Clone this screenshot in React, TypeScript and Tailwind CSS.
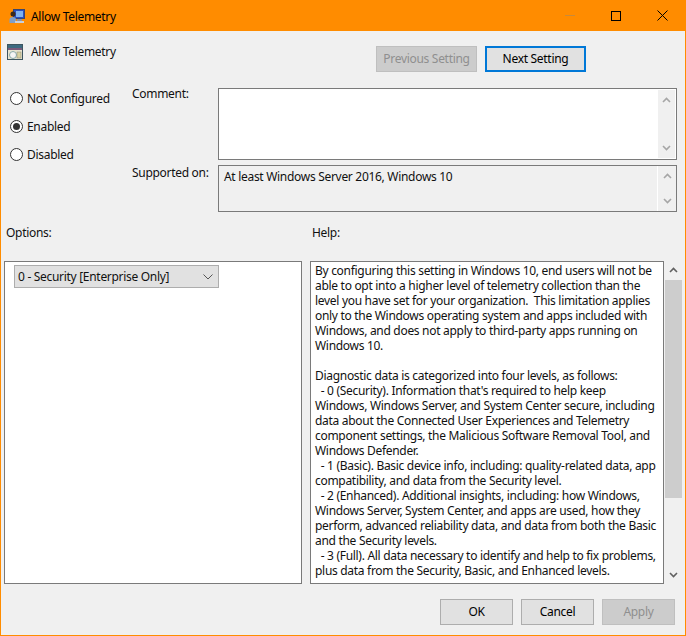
import React from 'react';

const helpLines = [
  'By configuring this setting in Windows 10, end users will not be',
  'able to opt into a higher level of telemetry collection than the',
  'level you have set for your organization.  This limitation applies',
  'only to the Windows operating system and apps included with',
  'Windows, and does not apply to third-party apps running on',
  'Windows 10.',
  '',
  'Diagnostic data is categorized into four levels, as follows:',
  '  - 0 (Security). Information that\'s required to help keep',
  'Windows, Windows Server, and System Center secure, including',
  'data about the Connected User Experiences and Telemetry',
  'component settings, the Malicious Software Removal Tool, and',
  'Windows Defender.',
  '  - 1 (Basic). Basic device info, including: quality-related data, app',
  'compatibility, and data from the Security level.',
  '  - 2 (Enhanced). Additional insights, including: how Windows,',
  'Windows Server, System Center, and apps are used, how they',
  'perform, advanced reliability data, and data from both the Basic',
  'and the Security levels.',
  '  - 3 (Full). All data necessary to identify and help to fix problems,',
  'plus data from the Security, Basic, and Enhanced levels.',
];

function Chevron({ up, color = '#a6a6a6' }: { up?: boolean; color?: string }) {
  return (
    <svg width="9" height="6" viewBox="0 0 9 6" fill="none">
      <path d={up ? 'M1 5L4.5 1.5L8 5' : 'M1 1L4.5 4.5L8 1'} stroke={color} strokeWidth="1.6" />
    </svg>
  );
}

function Radio({ label, checked }: { label: string; checked?: boolean }) {
  return (
    <div className="flex items-center h-[28px]">
      <div className="w-[13px] h-[13px] rounded-full border border-[#333] bg-white flex items-center justify-center">
        {checked && <div className="w-[7px] h-[7px] rounded-full bg-[#333]" />}
      </div>
      <span className="ml-[4px]">{label}</span>
    </div>
  );
}

function DialogButton({ label, disabled, focus, w }: { label: string; disabled?: boolean; focus?: boolean; w: string }) {
  const look = disabled
    ? 'bg-[#cccccc] border border-[#bfbfbf] text-[#8f8f8f]'
    : focus
      ? 'bg-[#e1e1e1] border-2 border-[#0078d7] text-black'
      : 'bg-[#e1e1e1] border border-[#adadad] text-black';
  return <div className={`${w} ${look} flex items-center justify-center pb-px`}>{label}</div>;
}

export default function App() {
  return (
    <div className="w-[686px] h-[636px] bg-[#f0f0f0] border-x border-b border-[#ff8c00] flex flex-col text-[12px] leading-[15px] tracking-[-0.3px] text-[#111] font-['Noto_Sans','Open_Sans',sans-serif] overflow-hidden">
      {/* title bar */}
      <div className="h-[31px] -mx-px bg-[#ff8c00] flex items-center shrink-0">
        <svg className="ml-[9px]" width="16" height="16" viewBox="0 0 16 16">
          <rect x="4.5" y="1.5" width="11" height="9" fill="#2a4fc0" stroke="#39456e" />
          <rect x="7" y="3" width="7" height="6" fill="#7fb2f0" />
          <rect x="8" y="11" width="5" height="2" fill="#8a93a8" />
          <circle cx="4" cy="6" r="2.5" fill="#3a2a1c" />
          <path d="M0.5 15V11.5C0.5 9.8 2 9 4 9C6 9 7 10 7 11.5V15Z" fill="#7f9fc8" />
          <rect x="6" y="13" width="9" height="2" fill="#c8cfda" />
        </svg>
        <span className="ml-[6px] pt-px text-black">Allow Telemetry</span>
        <div className="ml-auto flex items-center h-full">
          <div className="w-[46px] flex justify-center"><div className="w-[10px] h-px bg-[#c98a3a]" /></div>
          <div className="w-[46px] flex justify-center"><div className="w-[10px] h-[10px] border border-black" /></div>
          <div className="w-[46px] flex justify-center mr-px">
            <svg width="11" height="11" viewBox="0 0 11 11" fill="none"><path d="M0.5 0.5L10.5 10.5M10.5 0.5L0.5 10.5" stroke="#000" /></svg>
          </div>
        </div>
      </div>

      {/* header */}
      <div className="h-[57px] flex shrink-0">
        <svg className="ml-[6px] mt-[13px]" width="16" height="16" viewBox="0 0 16 16">
          <rect x="0.5" y="0.5" width="15" height="15" fill="#e8e4d0" stroke="#3d5560" />
          <rect x="1" y="1" width="14" height="3" fill="#3d6a80" />
          <rect x="1" y="4" width="14" height="2" fill="#7a5a7a" />
          <circle cx="6" cy="11" r="3.5" fill="#f4f4f4" stroke="#8aa" />
          <rect x="10" y="8" width="4" height="6" fill="#d8d0a0" stroke="#887" strokeWidth="0.5" />
        </svg>
        <span className="ml-[8px] mt-[13px] w-[85px]">Allow Telemetry</span>
        <div className="ml-[260px] mt-[15px] h-[26px] flex gap-[8px]">
          <DialogButton label="Previous Setting" disabled w="w-[101px]" />
          <DialogButton label="Next Setting" focus w="w-[101px]" />
        </div>
      </div>

      {/* state, comment, supported */}
      <div className="h-[124px] flex shrink-0">
        <div className="w-[131px] pl-[9px] -mt-[4px]">
          <Radio label="Not Configured" />
          <Radio label="Enabled" checked />
          <Radio label="Disabled" />
        </div>
        <div className="w-[86px] -mt-[2px]">
          <div className="h-[79px]">Comment:</div>
          <div>Supported on:</div>
        </div>
        <div className="w-[459px] flex flex-col gap-[5px]">
          <div className="h-[73px] border border-[#7a7a7a] bg-white flex justify-end p-px">
            <div className="w-[17px] bg-[#f0f0f0] flex flex-col items-center justify-between py-[7px]">
              <Chevron up />
              <Chevron />
            </div>
          </div>
          <div className="h-[47px] border border-[#7a7a7a] flex">
            <div className="flex-1 pl-[5px] pt-[3px] border-r border-white">At least Windows Server 2016, Windows 10</div>
            <div className="w-[18px] flex flex-col items-center justify-between py-[7px]">
              <Chevron up />
              <Chevron />
            </div>
          </div>
        </div>
      </div>

      {/* labels */}
      <div className="h-[49px] flex pt-[13px] shrink-0">
        <span className="w-[311px] pl-[5px]">Options:</span>
        <span>Help:</span>
      </div>

      {/* panels */}
      <div className="h-[323px] flex shrink-0">
        <div className="ml-[3px] w-[298px] border border-[#7a7a7a] bg-white pl-[9px] pt-[3px]">
          <div className="w-[205px] h-[23px] bg-[#e1e1e1] border border-[#adadad] flex items-center pl-[3px] pr-[5px]">
            <span>0 - Security [Enterprise Only]</span>
            <svg className="ml-auto" width="10" height="6" viewBox="0 0 10 6" fill="none"><path d="M0.5 0.5L5 5L9.5 0.5" stroke="#555" /></svg>
          </div>
        </div>
        <div className="ml-[8px] w-[354px] border border-[#7a7a7a] bg-white pl-[4px] pt-px whitespace-pre overflow-hidden">
          {helpLines.map((line, i) => (
            <div key={i} className="h-[15px]">{line}</div>
          ))}
        </div>
        <div className="ml-px w-[17px] flex flex-col items-center py-[6px]">
          <Chevron up color="#606060" />
          <div className="w-[17px] h-[218px] bg-[#cdcdcd] mt-[7px]" />
          <div className="mt-auto"><Chevron color="#606060" /></div>
        </div>
      </div>

      {/* footer */}
      <div className="flex-1 flex justify-end pt-[15px] pr-[10px]">
        <div className="h-[26px] flex gap-[8px]">
          <DialogButton label="OK" w="w-[73px]" />
          <DialogButton label="Cancel" w="w-[73px]" />
          <DialogButton label="Apply" disabled w="w-[73px]" />
        </div>
      </div>
    </div>
  );
}
